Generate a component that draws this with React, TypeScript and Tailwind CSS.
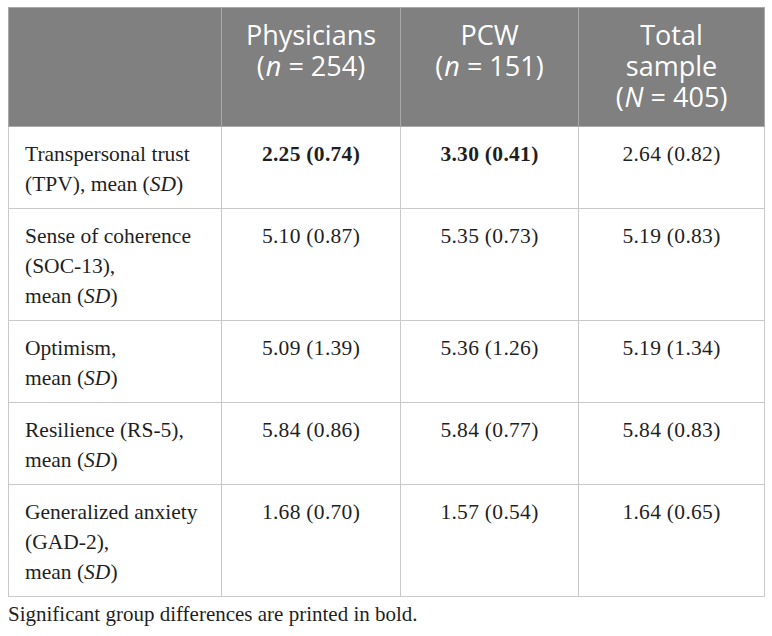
import React from "react";

// One row of the descriptive statistics table
interface StatRow {
  label: React.ReactNode;
  physicians: string;
  pcw: string;
  total: string;
  significant?: boolean;
}

const SD = () => <i>SD</i>;

// Italic sample-size letter in the header
const Count = ({ letter, value }: { letter: string; value: number }) => (
  <>
    (<i className="pl-px">{letter}</i> = {value})
  </>
);

const rows: StatRow[] = [
  {
    label: (
      <>
        Transpersonal trust
        <br />
        (TPV), mean (<SD />)
      </>
    ),
    physicians: "2.25 (0.74)",
    pcw: "3.30 (0.41)",
    total: "2.64 (0.82)",
    significant: true,
  },
  {
    label: (
      <>
        Sense of coherence
        <br />
        (SOC-13),
        <br />
        mean (<SD />)
      </>
    ),
    physicians: "5.10 (0.87)",
    pcw: "5.35 (0.73)",
    total: "5.19 (0.83)",
  },
  {
    label: (
      <>
        Optimism,
        <br />
        mean (<SD />)
      </>
    ),
    physicians: "5.09 (1.39)",
    pcw: "5.36 (1.26)",
    total: "5.19 (1.34)",
  },
  {
    label: (
      <>
        Resilience (RS-5),
        <br />
        mean (<SD />)
      </>
    ),
    physicians: "5.84 (0.86)",
    pcw: "5.84 (0.77)",
    total: "5.84 (0.83)",
  },
  {
    label: (
      <>
        Generalized anxiety
        <br />
        (GAD-2),
        <br />
        mean (<SD />)
      </>
    ),
    physicians: "1.68 (0.70)",
    pcw: "1.57 (0.54)",
    total: "1.64 (0.65)",
  },
];

const serif = { fontFamily: '"Liberation Serif", "Times New Roman", serif' };

export default function App() {
  const headCell =
    "border border-[#a9a9a9] px-2 pt-[11px] pb-[14px] text-center align-top font-normal";
  const bodyCell =
    "border border-[#c9c9c9] pt-3 pb-[9px] align-top text-center";

  return (
    <div className="min-h-screen bg-white pl-2 pt-[7px] text-[#1f1f1f]">
      <table className="w-[756px] table-fixed border-collapse">
        <colgroup>
          <col className="w-[213px]" />
          <col className="w-[179px]" />
          <col className="w-[178px]" />
          <col className="w-[186px]" />
        </colgroup>
        <thead>
          <tr
            className="bg-[#808080] text-[27px] leading-[31px] text-white"
            style={{ fontFamily: '"Open Sans", "Noto Sans", sans-serif' }}
          >
            <th className={headCell}></th>
            <th className={headCell}>
              Physicians
              <br />
              <Count letter="n" value={254} />
            </th>
            <th className={headCell}>
              PCW
              <br />
              <Count letter="n" value={151} />
            </th>
            <th className={headCell}>
              Total
              <br />
              sample
              <br />
              <Count letter="N" value={405} />
            </th>
          </tr>
        </thead>
        <tbody className="text-[21.5px] leading-[30px]" style={serif}>
          {rows.map((row, i) => (
            <tr key={i}>
              <td className={`${bodyCell} pl-4 text-left`}>{row.label}</td>
              <td className={`${bodyCell} tracking-[0.3px] ${row.significant ? "font-bold" : ""}`}>
                {row.physicians}
              </td>
              <td className={`${bodyCell} tracking-[0.3px] ${row.significant ? "font-bold" : ""}`}>
                {row.pcw}
              </td>
              <td className={`${bodyCell} tracking-[0.3px]`}>{row.total}</td>
            </tr>
          ))}
        </tbody>
      </table>
      <p className="mt-[2px] text-[21px] leading-[30px]" style={serif}>
        Significant group differences are printed in bold.
      </p>
    </div>
  );
}
